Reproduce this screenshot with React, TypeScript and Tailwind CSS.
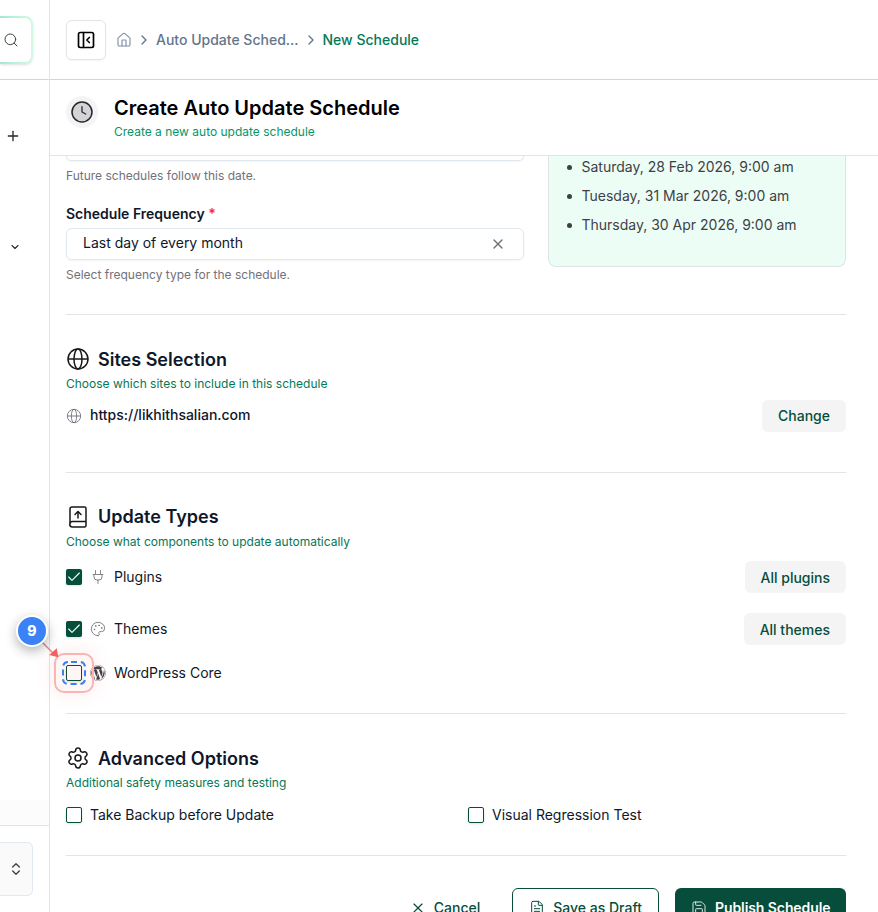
import React from "react";
import {
  Check,
  ChevronDown,
  ChevronRight,
  ChevronsUpDown,
  FileText,
  House,
  Palette,
  PanelLeftClose,
  Plus,
  Save,
  Search,
  Settings,
  X,
} from "lucide-react";
import { FaWordpress } from "react-icons/fa";

function ClockIcon() {
  return (
    <svg viewBox="0 0 24 24" fill="none" stroke="currentColor" strokeWidth="1.5" strokeLinecap="round" strokeLinejoin="round" className="size-6 text-[#27272a]">
      <circle cx="12" cy="12" r="10" fill="#d4d4d8" />
      <path d="M12 6.500V12l3.750 2" strokeWidth="1.25" />
    </svg>
  );
}

function GlobeIcon({ className, strokeWidth }: { className: string; strokeWidth: number }) {
  return (
    <svg viewBox="0 0 24 24" fill="none" stroke="currentColor" strokeWidth={strokeWidth} className={className}>
      <circle cx="12" cy="12" r="10" />
      <ellipse cx="12" cy="12" rx="4" ry="10" />
      <path d="M2 12h20" />
    </svg>
  );
}

function BookUpIcon() {
  return (
    <svg viewBox="0 0 24 24" fill="none" stroke="currentColor" strokeWidth="1.5" strokeLinecap="round" strokeLinejoin="round" className="size-6">
      <path d="M4 19V4a2 2 0 0 1 2-2h12.500a1.500 1.500 0 0 1 1.500 1.500v17a1.500 1.500 0 0 1-1.500 1.500H6.500a2.500 2.500 0 0 1 0-5.500H20" />
      <path d="M12 13V7" />
      <path d="m9 9.500 3-3 3 3" />
    </svg>
  );
}

function PlugIcon() {
  return (
    <svg viewBox="0 0 16 16" fill="none" stroke="currentColor" strokeWidth="1" strokeLinecap="round" strokeLinejoin="round" className="size-4 text-[#85858c]">
      <path d="M5.500 1.500v4M10.500 1.500v4M3 5.500h10M4 5.500v2.500a3 3 0 0 0 3 3h2a3 3 0 0 0 3-3V5.500M8 11v3.500" />
    </svg>
  );
}

function Checkbox({ checked = false }: { checked?: boolean }) {
  return (
    <span
      className={
        checked
          ? "flex size-4 shrink-0 items-center justify-center rounded-[2px] bg-[#064e3b] text-white shadow-sm"
          : "flex size-4 shrink-0 rounded-[2px] border border-[#064e3b] shadow-sm"
      }
    >
      {checked && <Check className="size-4" strokeWidth={1.6} />}
    </span>
  );
}

function SectionHead({ icon, title, subtitle, low = false }: { icon: React.ReactNode; title: string; subtitle: string; low?: boolean }) {
  return (
    <div>
      <div className="flex h-7 items-center gap-2 text-[#18181b]">
        {icon}
        <h2 className={low ? "pt-[2px] text-lg font-semibold text-[#0f172a]" : "text-lg font-semibold text-[#0f172a]"}>{title}</h2>
      </div>
      <p className="mt-[3px] text-xs leading-4 text-[#047857]">{subtitle}</p>
    </div>
  );
}

function SoftButton({ children, low = false }: { children: string; low?: boolean }) {
  return (
    <button
      className={
        low
          ? "h-8 rounded-md bg-[#f4f4f5] px-4 pt-[2px] text-sm font-medium text-[#064e3b]"
          : "h-8 rounded-md bg-[#f4f4f5] px-4 text-sm font-medium text-[#064e3b]"
      }
    >
      {children}
    </button>
  );
}

function Sidebar() {
  return (
    <aside className="flex h-full w-[50px] shrink-0 flex-col border-r border-[#e4e4e7]">
      <div className="h-20 border-b border-[#d4d4d8] pt-4">
        <div className="h-12 w-[33px] rounded-r-lg bg-gradient-to-r from-[#a7e8cf] to-[#d1fae5] py-[2px] pr-[2px] shadow-sm">
          <div className="flex h-full items-center rounded-r-md bg-white pl-[3px]">
            <Search className="size-4 text-[#3f3f46]" strokeWidth={1.5} />
          </div>
        </div>
      </div>
      <div className="flex grow flex-col pt-12">
        <Plus className="ml-[5px] size-4 text-[#27272a]" strokeWidth={2} />
        <ChevronDown className="mt-[97px] ml-[9px] size-3 text-[#27272a]" strokeWidth={2.2} />
      </div>
      <div className="h-[26px] border-b border-[#e4e4e7] bg-[#fcfcfc]" />
      <div className="h-[86px] pt-4">
        <div className="flex h-[54px] w-[33px] items-center rounded-r-md border border-l-0 border-[#e2e8f0] bg-[#fafafa] pl-2">
          <ChevronsUpDown className="size-4 text-[#3f3f46]" strokeWidth={2} />
        </div>
      </div>
    </aside>
  );
}

function TopBar() {
  return (
    <header className="flex h-20 shrink-0 items-center border-b border-[#d4d4d8] pl-4 text-sm font-medium">
      <button className="flex size-10 items-center justify-center rounded-md border border-[#e4e4e7] shadow-xs">
        <PanelLeftClose className="size-5 text-black" strokeWidth={2} />
      </button>
      <House className="ml-[10px] size-4 text-[#8290a6]" strokeWidth={1.75} />
      <ChevronRight className="ml-1 size-4 text-[#64748b]" strokeWidth={2} />
      <span className="ml-1 text-[#64748b]">Auto Update Sched...</span>
      <ChevronRight className="ml-1 size-4 text-[#64748b]" strokeWidth={2} />
      <span className="ml-1 text-[#047857]">New Schedule</span>
    </header>
  );
}

function TitleBar() {
  return (
    <div className="flex h-[76px] shrink-0 border-b border-[#e4e4e7] pt-4 pl-4">
      <div className="flex size-8 items-center justify-center rounded-full bg-[#f4f4f5]">
        <ClockIcon />
      </div>
      <div className="ml-4 -mt-[2px]">
        <h1 className="text-xl leading-7 font-semibold text-black">Create Auto Update Schedule</h1>
        <p className="mt-[2px] text-xs leading-4 text-[#059669]">Create a new auto update schedule</p>
      </div>
    </div>
  );
}

function ScheduleSection() {
  return (
    <section className="flex h-[159px] gap-6 border-b border-[#e4e4e7]">
      <div className="w-[458px]">
        <div className="h-[5px] rounded-b-md border border-t-0 border-[#e2e8f0] shadow-xs" />
        <p className="mt-[7px] text-xs leading-4 text-[#71717a]">Future schedules follow this date.</p>
        <p className="mt-5 text-sm leading-5 font-semibold text-[#0f172a]">
          Schedule Frequency <span className="text-[#fb2c36]">*</span>
        </p>
        <div className="mt-1 flex h-8 items-center justify-between rounded-md border border-[#e2e8f0] pr-[17px] pl-4 text-sm text-[#0f172a] shadow-xs">
          <span className="pb-[2px]">Last day of every month</span>
          <X className="size-4 text-[#71717a]" strokeWidth={2} />
        </div>
        <p className="mt-[7px] text-xs leading-4 text-[#71717a]">Select frequency type for the schedule.</p>
      </div>
      <div className="h-[111px] w-[298px] rounded-b-lg border border-t-0 border-[#dfe5e4] bg-[#ecfdf5] pl-[32.5px] text-sm leading-5 text-[#3f3f46]">
        <ul className="mt-[1px] space-y-[9px]">
          {["Saturday, 28 Feb 2026, 9:00 am", "Tuesday, 31 Mar 2026, 9:00 am", "Thursday, 30 Apr 2026, 9:00 am"].map((date) => (
            <li key={date} className="-ml-[14.5px] flex items-center">
              <span className="mt-px mr-[9.500px] size-[5px] rounded-full bg-[#3f3f46]" />
              {date}
            </li>
          ))}
        </ul>
      </div>
    </section>
  );
}

function SitesSection() {
  return (
    <section className="h-[158px] border-b border-[#e4e4e7] pt-[30px]">
      <SectionHead
        low
        icon={<GlobeIcon className="size-6" strokeWidth={1.5} />}
        title="Sites Selection"
        subtitle="Choose which sites to include in this schedule"
      />
      <div className="mt-2 flex h-8 items-center text-sm">
        <GlobeIcon className="size-4 text-[#71717a]" strokeWidth={1.35} />
        <span className="ml-2 pb-[2px] font-medium text-[#0f172a]">https://likhithsalian.com</span>
        <span className="grow" />
        <SoftButton>Change</SoftButton>
      </div>
    </section>
  );
}

function UpdateRow({ checked, icon, label, action }: { checked?: boolean; icon: React.ReactNode; label: string; action?: string }) {
  return (
    <div className="flex h-8 items-center text-sm text-[#0f172a]">
      <Checkbox checked={checked} />
      <span className="ml-2 flex size-4">{icon}</span>
      <span className="ml-2 grow">{label}</span>
      {action && <SoftButton low>{action}</SoftButton>}
    </div>
  );
}

function UpdatesSection() {
  return (
    <section className="h-[241px] border-b border-[#e4e4e7] pt-[30px]">
      <SectionHead icon={<BookUpIcon />} title="Update Types" subtitle="Choose what components to update automatically" />
      <div className="mt-[11px]">
        <UpdateRow checked icon={<PlugIcon />} label="Plugins" action="All plugins" />
      </div>
      <div className="mt-5">
        <UpdateRow checked icon={<Palette className="size-4 text-[#71717a]" strokeWidth={1.3} />} label="Themes" action="All themes" />
      </div>
      <div className="mt-3">
        <UpdateRow icon={<FaWordpress className="size-4 text-[#3f3f46]" />} label="WordPress Core" />
      </div>
    </section>
  );
}

function AdvancedSection() {
  return (
    <section className="h-[142px] border-b border-[#e4e4e7] pt-[30px]">
      <SectionHead
        low
        icon={<Settings className="size-6" strokeWidth={1.5} />}
        title="Advanced Options"
        subtitle="Additional safety measures and testing"
      />
      <div className="mt-[14px] flex text-sm text-[#0f172a]">
        <label className="flex w-[402px] items-center gap-2">
          <Checkbox />
          Take Backup before Update
        </label>
        <label className="flex items-center gap-2">
          <Checkbox />
          Visual Regression Test
        </label>
      </div>
    </section>
  );
}

function Actions() {
  return (
    <div className="flex justify-end gap-4 pt-8 text-sm font-medium text-[#064e3b]">
      <button className="flex h-10 items-center gap-2 px-4">
        <X className="size-4" strokeWidth={1.75} />
        Cancel
      </button>
      <button className="flex h-10 items-center gap-2 rounded-md border border-[#064e3b] px-4">
        <FileText className="size-4" strokeWidth={1.5} />
        Save as Draft
      </button>
      <button className="flex h-10 w-[171px] items-center gap-2 rounded-md bg-[#064e3b] pl-4 font-semibold whitespace-nowrap text-white">
        <Save className="size-4" strokeWidth={1.3} />
        <span className="tracking-[-0.006em]">Publish Schedule</span>
      </button>
    </div>
  );
}

/* Numbered walkthrough marker that points at the WordPress Core checkbox. */
function StepMarker() {
  return (
    <div className="pointer-events-none absolute top-[615px] left-4">
      <div className="absolute top-[38px] left-[38px] size-10 rounded-[10px] border-2 border-[#f9b4b4] bg-[#ef4444]/5 shadow-[0_0_20px_rgba(239,68,68,0.12)]" />
      <svg className="absolute top-[46px] left-[46px] size-6" viewBox="0 0 24 24" fill="none">
        <rect x="1" y="1" width="22" height="22" rx="5" stroke="#3b7ff0" strokeWidth="2" strokeDasharray="6 3.927" strokeDashoffset="-3" />
      </svg>
      <svg className="absolute top-[25px] left-6 size-5" viewBox="0 0 20 20">
        <path d="M2 2 13 13" stroke="#e58a8a" strokeWidth="1.500" />
        <path d="M18.300 17.300 9.300 15 16.700 8.300Z" fill="#ef6262" />
      </svg>
      <div className="absolute top-0 left-0 flex size-8 items-center justify-center rounded-full border-2 border-white bg-[#3b82f6] text-sm font-extrabold text-white shadow-[0_4px_12px_rgba(0,0,0,0.3)]">
        9
      </div>
    </div>
  );
}

export default function App() {
  return (
    <div className="relative flex h-[912px] w-[878px] overflow-hidden bg-white font-['Inter',sans-serif]">
      <Sidebar />
      <main className="flex min-w-0 grow flex-col">
        <TopBar />
        <TitleBar />
        <div className="min-h-0 grow overflow-hidden pr-8 pl-4">
          <ScheduleSection />
          <SitesSection />
          <UpdatesSection />
          <AdvancedSection />
          <Actions />
        </div>
      </main>
      <StepMarker />
    </div>
  );
}
